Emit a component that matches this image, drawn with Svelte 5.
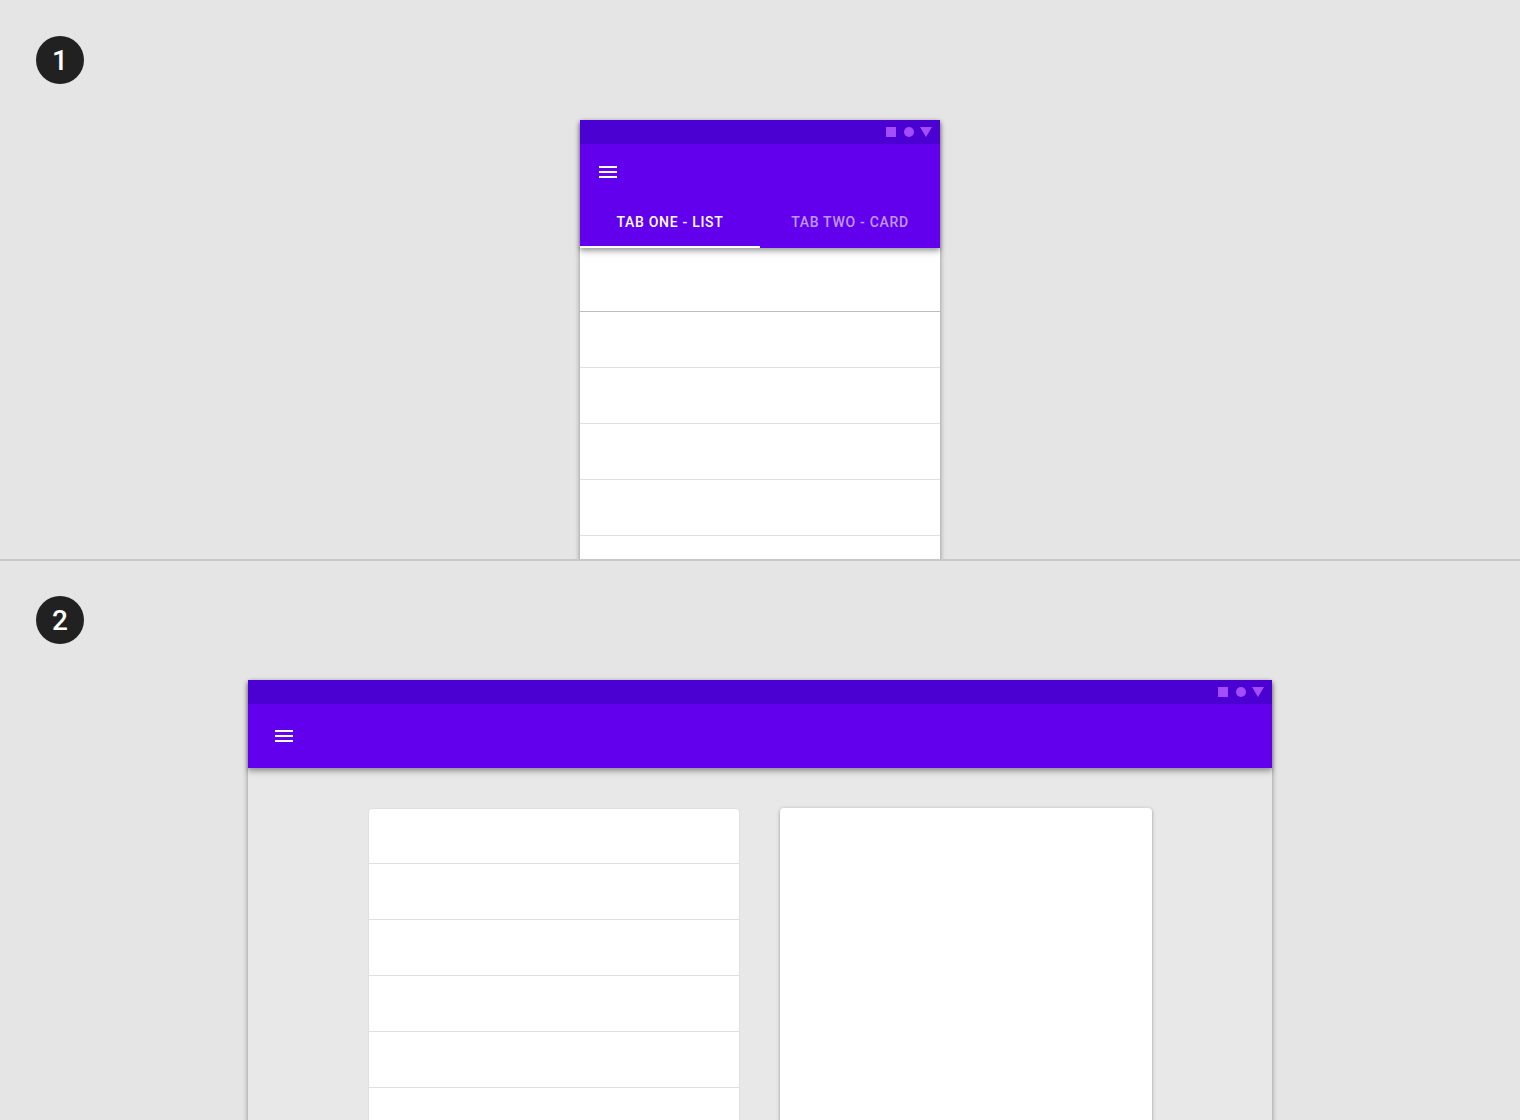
<script>
    const tabs = ["Tab one - List", "Tab two - Card"];
    let activeTab = $state(0);

    // Blank rows for the lists
    const rows = Array.from({ length: 8 }, (_, i) => i);
</script>

{#snippet statusBar()}
    <div class="status-bar">
        <svg width="46" height="10" viewBox="0 0 46 10" aria-hidden="true">
            <path d="M0 0h10v10H0z" />
            <circle cx="23" cy="5" r="5" />
            <path d="M34 0h12l-6 10z" />
        </svg>
    </div>
{/snippet}

{#snippet menuButton()}
    <button class="menu-button" aria-label="Open menu">
        <svg width="24" height="24" viewBox="0 0 24 24" aria-hidden="true">
            <path d="M3 18h18v-2H3v2zm0-5h18v-2H3v2zm0-7v2h18V6H3z" />
        </svg>
    </button>
{/snippet}

<main>
    <!-- Mobile: content split into tabs -->
    <section class="panel">
        <span class="badge">1</span>
        <div class="device phone">
            <header>
                {@render statusBar()}
                <div class="app-bar">
                    {@render menuButton()}
                </div>
                <div class="tabs" role="tablist">
                    {#each tabs as tab, i}
                        <button
                            class="tab"
                            class:active={activeTab === i}
                            role="tab"
                            aria-selected={activeTab === i}
                            onclick={() => (activeTab = i)}
                        >
                            {tab}
                        </button>
                    {/each}
                </div>
            </header>
            {#if activeTab === 0}
                <ul class="list">
                    {#each rows as row (row)}
                        <li></li>
                    {/each}
                </ul>
            {/if}
        </div>
    </section>

    <!-- Tablet: list and card side by side -->
    <section class="panel">
        <span class="badge">2</span>
        <div class="device tablet">
            <header>
                {@render statusBar()}
                <div class="app-bar">
                    {@render menuButton()}
                </div>
            </header>
            <div class="columns">
                <ul class="list outlined">
                    {#each rows as row (row)}
                        <li></li>
                    {/each}
                </ul>
                <div class="card"></div>
            </div>
        </div>
    </section>
</main>

<style>
    :global(body) {
        margin: 0;
        background: #e5e5e5;
        font-family: Roboto, sans-serif;
    }

    main {
        display: grid;
        grid-template-rows: 1fr 1fr;
        height: 100vh;
    }

    .panel {
        box-sizing: border-box;
        display: flex;
        flex-direction: column;
        gap: 36px;
        min-height: 0;
        padding-top: 36px;
        overflow: hidden;
        background: #e5e5e5;
    }

    .panel:first-child {
        border-bottom: 1px solid #c8c8c8;
    }

    .panel:last-child {
        padding-top: 35px;
        border-top: 1px solid #c8c8c8;
    }

    .badge {
        flex: none;
        width: 48px;
        height: 48px;
        margin-left: 36px;
        border-radius: 50%;
        background: #212121;
        color: #fff;
        font-size: 28px;
        font-weight: 500;
        line-height: 50px;
        text-align: center;
    }

    .device {
        flex: 1 0 auto;
        display: flex;
        flex-direction: column;
        width: 100%;
        margin: 0 auto;
        box-shadow: 0 2px 6px rgba(0, 0, 0, 0.24), 0 2px 4px rgba(0, 0, 0, 0.2);
    }

    .phone {
        max-width: 360px;
        background: #fff;
    }

    .tablet {
        max-width: 1024px;
        background: #e8e8e8;
    }

    header {
        position: relative;
        background: #6200ee;
        box-shadow: 0 2px 4px rgba(0, 0, 0, 0.2), 0 4px 6px rgba(0, 0, 0, 0.22);
    }

    .status-bar {
        display: flex;
        align-items: center;
        justify-content: flex-end;
        height: 24px;
        padding-right: 8px;
        background: #4b01d1;
        fill: #a44dff;
    }

    .app-bar {
        display: flex;
        align-items: center;
        height: 56px;
        padding: 0 16px;
    }

    .tablet .app-bar {
        height: 64px;
        padding: 0 24px;
    }

    .menu-button {
        display: flex;
        padding: 0;
        border: 0;
        background: none;
        fill: #fff;
        cursor: pointer;
    }

    .tabs {
        display: flex;
        height: 48px;
    }

    .tab {
        flex: 1;
        padding: 0 0 2px;
        border: 0;
        border-bottom: 2px solid transparent;
        background: none;
        color: rgba(255, 255, 255, 0.6);
        font-family: inherit;
        font-size: 14px;
        font-weight: 500;
        letter-spacing: 0.05em;
        line-height: 16px;
        text-transform: uppercase;
        cursor: pointer;
    }

    .tab.active {
        border-bottom-color: #fff;
        color: #fff;
    }

    .list {
        margin: 0;
        padding: 0;
        list-style: none;
    }

    .list li {
        box-sizing: border-box;
        height: 56px;
        border-bottom: 1px solid #dfdfdf;
    }

    .phone .list {
        padding-top: 8px;
    }

    .phone .list li:first-child {
        border-bottom-color: #bdbdbd;
    }

    .columns {
        flex: 1;
        display: grid;
        grid-template-columns: 1fr 1fr;
        gap: 40px;
        padding: 40px 120px 0;
    }

    .outlined {
        border: 1px solid #dfdfdf;
        border-radius: 4px;
        background: #fff;
    }

    .outlined li:first-child {
        height: 55px;
    }

    .card {
        border-radius: 4px;
        background: #fff;
        box-shadow: 0 1px 4px rgba(0, 0, 0, 0.24), 0 1px 2px rgba(0, 0, 0, 0.2);
    }
</style>
